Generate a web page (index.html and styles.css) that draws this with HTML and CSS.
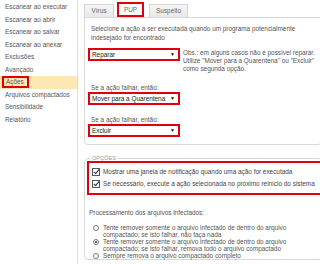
FILE: index.html
```html
<!DOCTYPE html>
<html lang="pt">

<head>
    <meta charset="UTF-8">
    <title>Ações</title>
    <link rel="stylesheet" href="styles.css">
</head>

<body>
    <div class="window">
        <nav class="sidebar">
            <div class="nav-item">Escanear ao executar</div>
            <div class="nav-item">Escanear ao abrir</div>
            <div class="nav-item">Escanear ao salvar</div>
            <div class="nav-item">Escanear ao anexar</div>
            <div class="nav-item">Exclusões</div>
            <div class="nav-item">Avançado</div>
            <div class="nav-item active"><span class="mark">Ações</span></div>
            <div class="nav-item">Arquivos compactados</div>
            <div class="nav-item">Sensibilidade</div>
            <div class="nav-item">Relatório</div>
        </nav>

        <main class="content">
            <div class="tabs">
                <div class="tab virus">Vírus</div>
                <div class="tab selected">PUP</div>
                <div class="tab suspect">Suspeito</div>
            </div>

            <section class="page">
                <p class="desc">Selecione a ação a ser executada quando um programa potencialmente indesejado for encontrado</p>
                <div class="first-row">
                    <div class="select">Reparar<span class="arrow">▼</span></div>
                    <p class="note">Obs.: em alguns casos não é possível reparar.<br>Utilize "Mover para a Quarentena" ou "Excluir"<br>como segunda opção.</p>
                </div>
                <p class="label">Se a ação falhar, então:</p>
                <div class="select">Mover para a Quarentena<span class="arrow">▼</span></div>
                <p class="label">Se a ação falhar, então:</p>
                <div class="select">Excluir<span class="arrow">▼</span></div>
            </section>

            <fieldset class="options">
                <legend>OPÇÕES</legend>
                <div class="checks">
                    <div class="check-row"><span class="checkbox"></span>Mostrar uma janela de notificação quando uma ação for executada</div>
                    <div class="check-row"><span class="checkbox"></span>Se necessário, execute a ação selecionada no próximo reinício do sistema</div>
                </div>
                <p class="subhead">Processamento dos arquivos infectados:</p>
                <div class="radio-row"><span class="radio"></span><span>Tente remover somente o arquivo infectado de dentro do arquivo<br>compactado; se isto falhar, não faça nada</span></div>
                <div class="radio-row"><span class="radio on"></span><span>Tente remover somente o arquivo infectado de dentro do arquivo<br>compactado; se isto falhar, remova todo o arquivo compactado</span></div>
                <div class="radio-row"><span class="radio"></span><span>Sempre remova o arquivo compactado completo</span></div>
            </fieldset>
        </main>
    </div>
</body>

</html>
```

FILE: styles.css
```css
body {
    margin: 0;
    background-color: #ffffff;
    font-family: 'Liberation Sans', Arial, sans-serif;
    font-size: 6.4px;
    color: #555555;
}

p {
    margin: 0;
}

.window {
    display: flex;
    width: 320px;
    height: 264px;
    overflow: hidden;
}

/* left menu */
.sidebar {
    width: 77px;
    flex-shrink: 0;
    border-right: 1px solid #dcdcdc;
    padding-top: 1px;
}

.nav-item {
    height: 12.5px;
    line-height: 12.5px;
    padding-left: 5px;
    color: #555555;
    white-space: nowrap;
}

.nav-item.active {
    background-color: #fde7b3;
}

.mark {
    display: inline-block;
    margin-left: -3px;
    padding: 0 3px 0 2px;
    line-height: 8px;
    border: 2px solid #e0000b;
}

/* right side */
.content {
    flex: 1;
    padding: 4px 4px 0 6px;
}

.tabs {
    display: flex;
    height: 13px;
}

.tab {
    box-sizing: border-box;
    text-align: center;
    line-height: 12px;
    border: 1px solid #d4d4d4;
    border-bottom: none;
    background: linear-gradient(#f6f6f6, #e8e8e8);
    color: #666666;
}

.tab.virus {
    width: 30px;
}

.tab.suspect {
    width: 39px;
    margin-left: 5px;
}

.tab.selected {
    width: 27px;
    height: 15px;
    margin: -2px 0 0 3px;
    background: #ffffff;
    border: 2px solid #e0000b;
    line-height: 11px;
}

.page {
    height: 128px;
    box-sizing: border-box;
    border: 1px solid #d8d8d8;
    border-radius: 0 0 4px 4px;
    padding: 6px 6px 0 3px;
}

.desc {
    line-height: 9px;
    padding-left: 3px;
}

.first-row {
    display: flex;
    gap: 3px;
    margin-top: 6px;
}

.select {
    position: relative;
    width: 86px;
    height: 9px;
    line-height: 9px;
    border: 2px solid #e0000b;
    padding-left: 2px;
    background: #ffffff;
    color: #222222;
    flex-shrink: 0;
}

.arrow {
    position: absolute;
    right: 3px;
    top: 0;
    font-size: 5px;
    color: #111111;
}

.note {
    line-height: 8px;
    padding-top: 1px;
    white-space: nowrap;
}

.label {
    margin-top: 10px;
    line-height: 9px;
    padding-left: 3px;
}

.options {
    margin: 10px 0 0 0;
    height: 105px;
    box-sizing: border-box;
    border: 1px solid #d8d8d8;
    border-radius: 4px;
    padding: 0 0 0 2px;
}

.options legend {
    color: #999999;
    font-size: 5.6px;
    padding: 0 2px;
    margin-left: 3px;
}

.checks {
    margin-right: -4px;
    border: 2px solid #e0000b;
    padding: 3px 0 3px 3px;
}

.check-row {
    display: flex;
    align-items: center;
    gap: 3px;
    line-height: 12px;
    color: #444444;
    white-space: nowrap;
}

.checkbox {
    width: 6px;
    height: 6px;
    border: 1px solid #555555;
    background: #ffffff;
    position: relative;
    flex-shrink: 0;
}

.checkbox::after {
    content: '';
    position: absolute;
    left: 1.5px;
    top: -1px;
    width: 2px;
    height: 5px;
    border-right: 1.5px solid #1a2a5a;
    border-bottom: 1.5px solid #1a2a5a;
    transform: rotate(40deg);
}

.subhead {
    margin-top: 13px;
    margin-bottom: 7px;
    line-height: 9px;
    padding-left: 2px;
}

.radio-row {
    display: flex;
    gap: 4px;
    padding-left: 6px;
    line-height: 7px;
    white-space: nowrap;
}

.radio {
    width: 4px;
    height: 4px;
    margin-top: 1px;
    border: 1px solid #777777;
    border-radius: 50%;
    flex-shrink: 0;
    position: relative;
}

.radio.on::after {
    content: '';
    position: absolute;
    left: 1px;
    top: 1px;
    width: 2px;
    height: 2px;
    border-radius: 50%;
    background: #333333;
}
```
